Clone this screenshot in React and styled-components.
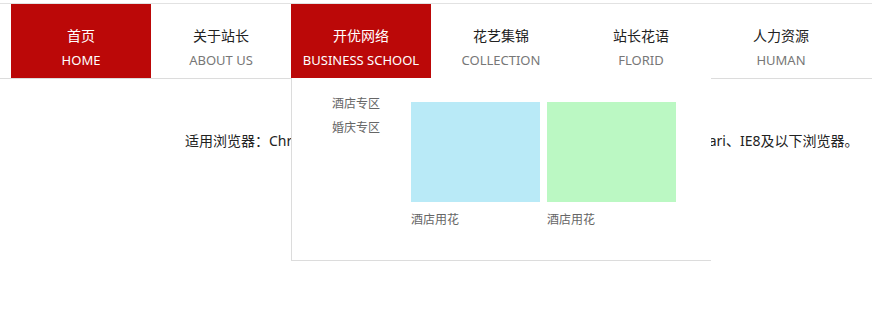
import styled, { createGlobalStyle } from "styled-components"

const GlobalStyle = createGlobalStyle`
    body {
        margin: 0;
        background: #fff;
        font-family: "Noto Sans", "Noto Sans CJK SC", sans-serif;
    }
    ul {
        margin: 0;
        padding: 0;
        list-style: none;
    }
`

const menu = [
    { cn: "首页", en: "HOME", active: true },
    { cn: "关于站长", en: "ABOUT US" },
    { cn: "开优网络", en: "BUSINESS SCHOOL", active: true, dropdown: true },
    { cn: "花艺集锦", en: "COLLECTION" },
    { cn: "站长花语", en: "FLORID" },
    { cn: "人力资源", en: "HUMAN" },
]

function Dropdown() {
    return (
        <Panel>
            <SubList>
                <li>酒店专区</li>
                <li>婚庆专区</li>
            </SubList>
            <Cards>
                <Card>
                    <Picture $bg = "#b9eaf7"/>
                    <Caption>酒店用花</Caption>
                </Card>
                <Card>
                    <Picture $bg = "#bbf8c3"/>
                    <Caption>酒店用花</Caption>
                </Card>
            </Cards>
        </Panel>
    )
}

export default function App() {
    return (
        <Page>
            <GlobalStyle/>
            <Header>
                <Nav>
                    {menu.map((item, index) => (
                        <Item key = {index} $active = {item.active}>
                            <Cn $active = {item.active}>{item.cn}</Cn>
                            <En $active = {item.active}>{item.en}</En>
                            {item.dropdown && <Dropdown/>}
                        </Item>
                    ))}
                </Nav>
            </Header>
            <Notice>适用浏览器：Chrome、FireFox、2345、Sogou、QQ、猎豹、遨游、世界之窗、Safari、IE8及以下浏览器。</Notice>
        </Page>
    )
}

const Page = styled.div`
    min-height: 100vh;
    padding-top: 3px;
    box-sizing: border-box;
`
const Header = styled.div`
    border-top: 1px solid #e2e2e2;
    border-bottom: 1px solid #dcdcdc;
`
const Nav = styled.ul`
    display: flex;
    padding-left: 11px;
`
const Item = styled.li`
    position: relative;
    width: 140px;
    height: 74px;
    text-align: center;
    background: ${p => p.$active ? "#bb0808" : "transparent"};
`
const Cn = styled.div`
    padding-top: 22px;
    font-size: 14px;
    line-height: 20px;
    color: ${p => p.$active ? "#fff" : "#222"};
`
const En = styled.div`
    margin-top: 4px;
    font-size: 13px;
    line-height: 20px;
    color: ${p => p.$active ? "#fff" : "#777"};
`
const Panel = styled.div`
    position: absolute;
    top: 74px;
    left: 0;
    z-index: 2;
    box-sizing: border-box;
    width: 420px;
    height: 183px;
    padding: 14px 0 0 40px;
    display: flex;
    align-items: flex-start;
    text-align: left;
    background: #fff;
    border-left: 1px solid #dcdcdc;
    border-bottom: 1px solid #dcdcdc;
`
const SubList = styled.ul`
    width: 79px;
    font-size: 12px;
    line-height: 24px;
    color: #666;
`
const Cards = styled.div`
    display: flex;
    gap: 7px;
    padding-top: 10px;
`
const Card = styled.div`
    display: flex;
    flex-direction: column;
`
const Picture = styled.div`
    flex-shrink: 0;
    width: 129px;
    height: 100px;
    background: ${p => p.$bg};
`
const Caption = styled.span`
    margin-top: 9px;
    font-size: 12px;
    line-height: 18px;
    color: #666;
`
const Notice = styled.p`
    margin: 52px 0 0;
    padding-left: 185px;
    font-size: 14px;
    line-height: 20px;
    color: #222;
    white-space: nowrap;
`
